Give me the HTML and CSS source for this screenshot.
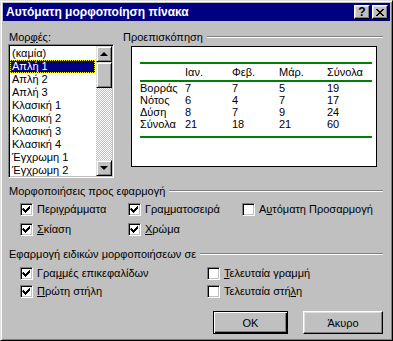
FILE: index.html
```html
<!DOCTYPE html>
<html lang="el">
<head>
    <meta charset="UTF-8">
    <title>Αυτόματη μορφοποίηση πίνακα</title>
    <link rel="stylesheet" href="styles.css">
</head>
<body>
    <div class="dialog">
        <div class="titlebar">
            <span class="title">Αυτόματη μορφοποίηση πίνακα</span>
            <div class="title-btns">
                <span class="tbtn help">?</span>
                <span class="tbtn">
                    <svg width="8" height="7" viewBox="0 0 8 7">
                        <path d="M0 0h2v1h1v1h2v-1h1v-1h2v1h-1v1h-1v1h-1v1h1v1h1v1h1v1h-2v-1h-1v-1h-2v1h-1v1h-2v-1h1v-1h1v-1h1v-1h-1v-1h-1v-1h-1z" fill="#000"/>
                    </svg>
                </span>
            </div>
        </div>

        <div class="top">
            <div class="formats">
                <div class="label">Μορ<u>φ</u>ές:</div>
                <div class="listbox">
                    <ul class="items">
                        <li>(καμία)</li>
                        <li class="selected">Απλή 1</li>
                        <li>Απλή 2</li>
                        <li>Απλή 3</li>
                        <li>Κλασική 1</li>
                        <li>Κλασική 2</li>
                        <li>Κλασική 3</li>
                        <li>Κλασική 4</li>
                        <li>Έγχρωμη 1</li>
                        <li>Έγχρωμη 2</li>
                    </ul>
                    <div class="scrollbar">
                        <div class="sb-btn"><span class="arrow-up"></span></div>
                        <div class="sb-thumb"></div>
                        <div class="sb-track"></div>
                        <div class="sb-btn"><span class="arrow-down"></span></div>
                    </div>
                </div>
            </div>

            <div class="preview-group">
                <div class="group-head">
                    <span>Προεπισκόπηση</span>
                    <span class="etch"></span>
                </div>
                <div class="preview">
                    <table class="sample">
                        <thead>
                            <tr><th></th><th>Ιαν.</th><th>Φεβ.</th><th>Μάρ.</th><th>Σύνολα</th></tr>
                        </thead>
                        <tbody>
                            <tr><td>Βορράς</td><td>7</td><td>7</td><td>5</td><td>19</td></tr>
                            <tr><td>Νότος</td><td>6</td><td>4</td><td>7</td><td>17</td></tr>
                            <tr><td>Δύση</td><td>8</td><td>7</td><td>9</td><td>24</td></tr>
                            <tr class="last"><td>Σύνολα</td><td>21</td><td>18</td><td>21</td><td>60</td></tr>
                        </tbody>
                    </table>
                </div>
            </div>
        </div>

        <div class="group group-formats">
            <div class="group-head">
                <span>Μορφοποιήσεις προς εφαρμογή</span>
                <span class="etch"></span>
            </div>
            <div class="checks checks-3">
                <label class="check"><span class="cb on"></span><span>Περι<u>γ</u>ράμματα</span></label>
                <label class="check"><span class="cb on"></span><span>Γρα<u>μ</u>ματοσειρά</span></label>
                <label class="check"><span class="cb"></span><span>Α<u>υ</u>τόματη Προσαρμογή</span></label>
                <label class="check"><span class="cb on"></span><span><u>Σ</u>κίαση</span></label>
                <label class="check"><span class="cb on"></span><span><u>Χ</u>ρώμα</span></label>
            </div>
        </div>

        <div class="group group-special">
            <div class="group-head">
                <span>Εφαρμογή ειδικών μορφοποιήσεων σε</span>
                <span class="etch"></span>
            </div>
            <div class="checks checks-2">
                <label class="check"><span class="cb on"></span><span>Γρα<u>μ</u>μές επικεφαλίδων</span></label>
                <label class="check"><span class="cb"></span><span><u>Τ</u>ελευταία γραμμή</span></label>
                <label class="check"><span class="cb on"></span><span><u>Π</u>ρώτη στήλη</span></label>
                <label class="check"><span class="cb"></span><span>Τελευταία στή<u>λ</u>η</span></label>
            </div>
        </div>

        <div class="buttons">
            <button class="btn default">OK</button>
            <button class="btn cancel">Άκυρο</button>
        </div>
    </div>
</body>
</html>
```

FILE: styles.css
```css
body {
    margin: 0;
    padding: 0;
    background-color: #c0c0c0;
    font-family: "Liberation Sans", Arial, sans-serif;
    font-size: 11px;
    color: #000;
}

u {
    text-decoration: underline;
    text-underline-offset: 1px;
}

.dialog {
    width: 393px;
    height: 341px;
    box-sizing: border-box;
    padding: 2px;
    border: 1px solid;
    border-color: #dfdfdf #000 #000 #dfdfdf;
    box-shadow: inset 1px 1px #fff, inset -1px -1px #808080;
    background-color: #c0c0c0;
    display: flex;
    flex-direction: column;
}

/* Title bar */
.titlebar {
    height: 18px;
    background-color: #000080;
    color: #fff;
    display: flex;
    align-items: center;
    justify-content: space-between;
    padding: 0 2px 0 3px;
}

.title {
    font-weight: bold;
    font-size: 12px;
}

.title-btns {
    display: flex;
    gap: 2px;
}

.tbtn {
    width: 16px;
    height: 14px;
    box-sizing: border-box;
    background-color: #c0c0c0;
    color: #000;
    border: 1px solid;
    border-color: #fff #000 #000 #fff;
    box-shadow: inset -1px -1px #808080, inset 1px 1px #dfdfdf;
    display: flex;
    align-items: center;
    justify-content: center;
}

.tbtn.help {
    font-weight: bold;
    font-size: 12px;
    line-height: 12px;
}

/* Top section */
.top {
    display: flex;
    padding-top: 9px;
}

.formats {
    width: 106px;
    margin-left: 5px;
}

.label {
    height: 14px;
    line-height: 14px;
    padding-left: 1px;
}

.listbox {
    height: 134px;
    box-sizing: border-box;
    background-color: #fff;
    border: 1px solid;
    border-color: #808080 #fff #fff #808080;
    box-shadow: inset 1px 1px #000, inset -1px -1px #c0c0c0;
    padding: 1px;
    display: flex;
}

.items {
    list-style: none;
    margin: 0;
    padding: 1px 0 0 0;
    flex: 1;
}

.items li {
    height: 13px;
    line-height: 13px;
    padding-left: 2px;
    margin-right: 1px;
    white-space: nowrap;
}

.items li.selected {
    background-color: #000080;
    color: #fff;
    outline: 1px dotted #ffff00;
    outline-offset: -1px;
}

.scrollbar {
    width: 16px;
    display: flex;
    flex-direction: column;
}

.sb-btn,
.sb-thumb {
    width: 16px;
    box-sizing: border-box;
    background-color: #c0c0c0;
    border: 1px solid;
    border-color: #dfdfdf #000 #000 #dfdfdf;
    box-shadow: inset 1px 1px #fff, inset -1px -1px #808080;
}

.sb-btn {
    height: 16px;
    display: flex;
    align-items: center;
    justify-content: center;
}

.sb-thumb {
    height: 26px;
}

.sb-track {
    flex: 1;
    background: repeating-conic-gradient(#c0c0c0 0 25%, #fff 0 50%) 0 0 / 2px 2px;
}

.arrow-up,
.arrow-down {
    width: 0;
    height: 0;
    border-left: 4px solid transparent;
    border-right: 4px solid transparent;
}

.arrow-up {
    border-bottom: 4px solid #000;
}

.arrow-down {
    border-top: 4px solid #000;
}

/* Group headers */
.group-head {
    display: flex;
    align-items: center;
    height: 14px;
    line-height: 14px;
    white-space: nowrap;
}

.etch {
    flex: 1;
    height: 0;
    border-top: 1px solid #808080;
    border-bottom: 1px solid #fff;
    margin-left: 4px;
}

.preview-group {
    flex: 1;
    margin-left: 9px;
    margin-right: 7px;
}

.preview {
    height: 121px;
    box-sizing: border-box;
    margin: 2px 6px 0 8px;
    background-color: #fff;
    border: 1px solid #000;
    padding: 15px 4px 0 8px;
}

.sample {
    width: 232px;
    table-layout: fixed;
    border-collapse: collapse;
    border-top: 2px solid #008000;
    border-bottom: 2px solid #008000;
    font-size: 11px;
}

.sample th,
.sample td {
    padding: 0;
    text-align: left;
    font-weight: normal;
    white-space: nowrap;
}

.sample th:nth-child(1) { width: 45px; }
.sample th:nth-child(2) { width: 47px; }
.sample th:nth-child(3) { width: 47px; }
.sample th:nth-child(4) { width: 48px; }

.sample thead tr {
    height: 18px;
    border-bottom: 2px solid #008000;
}

.sample tbody td {
    height: 12px;
    line-height: 12px;
}

.sample tr.last td {
    padding-bottom: 6px;
}

/* Option groups */
.group {
    padding: 0 7px 0 6px;
}

.group-formats {
    margin-top: 6px;
}

.group-special {
    margin-top: 8px;
}

.checks {
    display: grid;
    padding-left: 11px;
}

.checks-3 {
    grid-template-columns: 108px 114px auto;
    grid-auto-rows: 20px;
    margin-top: 1px;
}

.checks-2 {
    grid-template-columns: 187px auto;
    grid-auto-rows: 18px;
    margin-top: 3px;
}

.check {
    display: flex;
    align-items: center;
    gap: 4px;
    white-space: nowrap;
}

.cb {
    width: 13px;
    height: 13px;
    box-sizing: border-box;
    background-color: #fff;
    border: 1px solid;
    border-color: #808080 #fff #fff #808080;
    box-shadow: inset 1px 1px #000, inset -1px -1px #c0c0c0;
    flex-shrink: 0;
}

.cb.on {
    background: #fff url("data:image/svg+xml,%3Csvg xmlns='http://www.w3.org/2000/svg' width='11' height='11'%3E%3Cpath d='M2 4h1v1h1v1h1v-1h1v-1h1v-1h1v-1h1v3h-1v1h-1v1h-1v1h-1v1h-1v-1h-1v-1h-1v-1h-1z' fill='%23000'/%3E%3C/svg%3E") 0 0 no-repeat;
}

/* Buttons */
.buttons {
    display: flex;
    justify-content: flex-end;
    gap: 15px;
    margin-top: 11px;
    padding-right: 7px;
}

.btn {
    height: 23px;
    box-sizing: border-box;
    font-family: "Liberation Sans", Arial, sans-serif;
    font-size: 11px;
    font-weight: normal;
    color: #000;
    background-color: #c0c0c0;
    border: 1px solid;
    border-color: #fff #000 #000 #fff;
    box-shadow: inset -1px -1px #808080, inset 1px 1px #dfdfdf;
    padding: 0;
}

.btn.default {
    width: 75px;
    border-color: #000;
    box-shadow: inset 1px 1px #fff, inset -1px -1px #000, inset -2px -2px #808080;
}

.btn.cancel {
    width: 80px;
}
```
